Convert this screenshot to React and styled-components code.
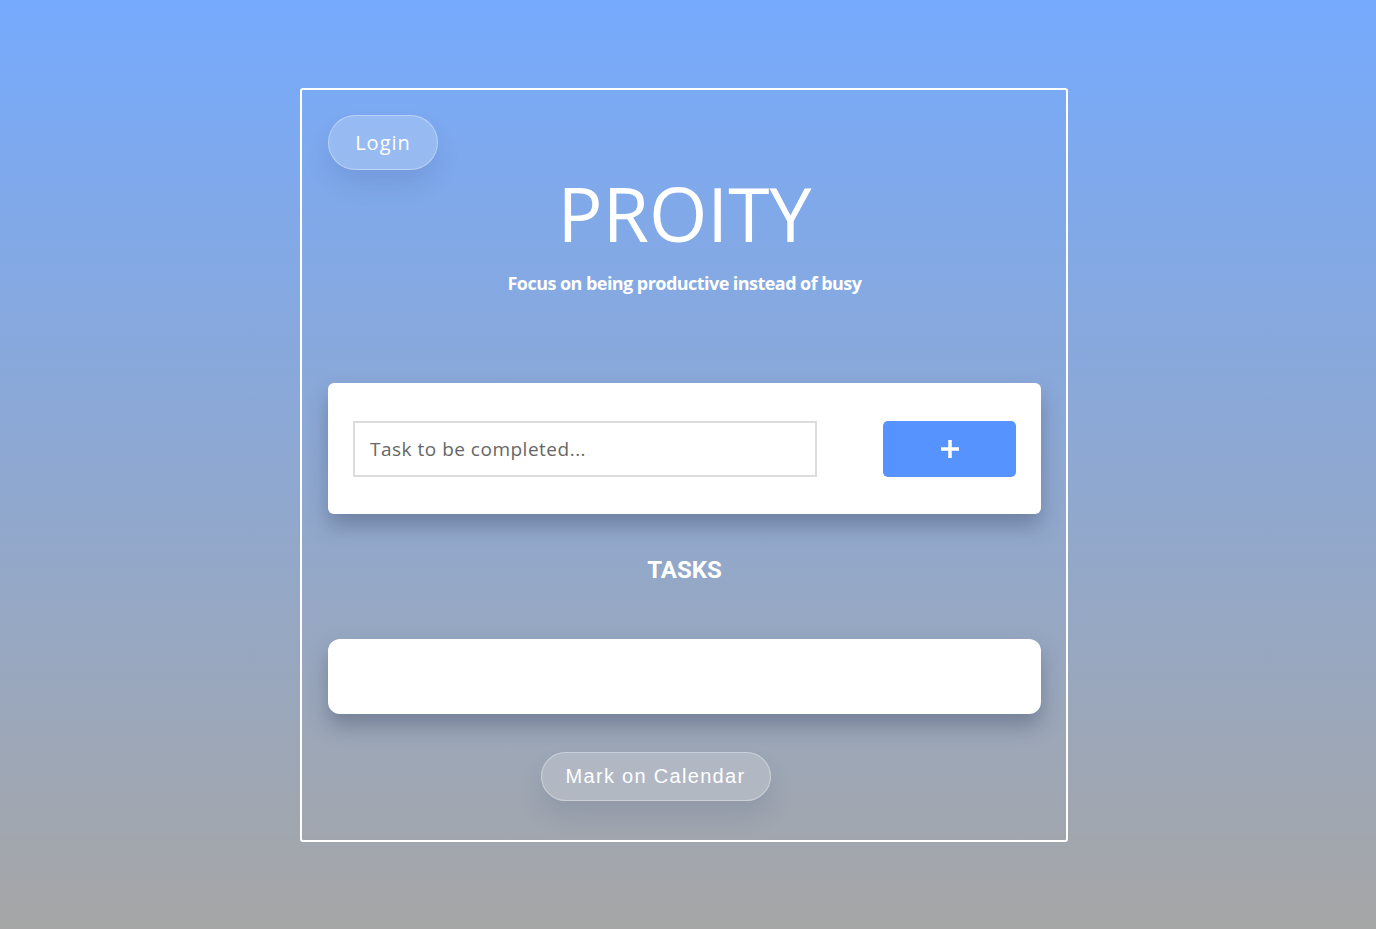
import React, { useState } from "react";
import styled, { createGlobalStyle } from "styled-components";

const GlobalStyle = createGlobalStyle`
    html, body {
        margin: 0;
        padding: 0;
    }
    body {
        font-family: "Open Sans", "Liberation Sans", sans-serif;
        background: linear-gradient(180deg, #76aafd 0%, #a6a6a6 100%);
        min-height: 929px;
    }
`;

const Page = styled.div`
    display: flex;
    justify-content: flex-start;
    padding: 88px 0 87px 300px;
`;

const Card = styled.div`
    width: 768px;
    height: 754px;
    box-sizing: border-box;
    border: 2px solid #ffffff;
    border-radius: 3px;
    padding: 25px 25px 0 26px;
    display: flex;
    flex-direction: column;
`;

const TopRow = styled.div`
    display: flex;
`;

const PillButton = styled.button`
    height: ${(p) => p.h}px;
    width: ${(p) => p.w}px;
    border-radius: 30px;
    background: rgba(255, 255, 255, 0.2);
    border: 1px solid rgba(255, 255, 255, 0.35);
    color: #ffffff;
    font-family: ${(p) => p.font};
    font-size: 20px;
    letter-spacing: ${(p) => p.spacing}px;
    box-shadow: 0 15px 25px rgba(40, 60, 110, 0.12);
    cursor: pointer;
    padding: 0;
`;

const Title = styled.h1`
    margin: 3px 0 0 0;
    text-align: center;
    color: #ffffff;
    font-family: "Open Sans", sans-serif;
    font-weight: 400;
    font-size: 75px;
    line-height: 80px;
`;

const Subtitle = styled.p`
    margin: 18px 0 0 0;
    text-align: center;
    color: #ffffff;
    font-family: "Open Sans", sans-serif;
    font-weight: 700;
    font-size: 18px;
    letter-spacing: -0.55px;
`;

const WhiteBox = styled.div`
    background: #ffffff;
    border-radius: ${(p) => p.radius}px;
    box-shadow: 0 12px 20px rgba(50, 60, 90, 0.35);
`;

const InputBox = styled(WhiteBox)`
    margin-top: 88px;
    height: 131px;
    box-sizing: border-box;
    padding: 37px 25px;
    display: flex;
    justify-content: space-between;
    align-items: center;
`;

const TaskInput = styled.input`
    width: 464px;
    height: 56px;
    box-sizing: border-box;
    border: 2px solid #dcdcdc;
    padding: 0 15px;
    font-family: "Open Sans", sans-serif;
    font-size: 19px;
    letter-spacing: 0.5px;
    color: #333;
    outline: none;
    &::placeholder {
        color: #666666;
    }
`;

const AddButton = styled.button`
    width: 133px;
    height: 56px;
    border: none;
    border-radius: 5px;
    background: #5693fe;
    display: flex;
    align-items: center;
    justify-content: center;
    cursor: pointer;
`;

const Heading = styled.h2`
    margin: 40px 0 0 0;
    text-align: center;
    color: #ffffff;
    font-family: Roboto, "Liberation Sans", sans-serif;
    font-weight: 700;
    font-size: 24px;
    line-height: 32px;
`;

const TaskList = styled(WhiteBox)`
    margin-top: 53px;
    height: 75px;
`;

const BottomRow = styled.div`
    display: flex;
    justify-content: center;
    margin-top: 38px;
    padding-right: 58px;
`;

export default function App() {
    const [task, setTask] = useState("");
    return (
        <>
            <GlobalStyle />
            <Page>
                <Card>
                    <TopRow>
                        <PillButton w={110} h={55} spacing={1} font={'"Open Sans", sans-serif'}>Login</PillButton>
                    </TopRow>
                    <Title>PROITY</Title>
                    <Subtitle>Focus on being productive instead of busy</Subtitle>
                    <InputBox radius={6}>
                        <TaskInput
                            placeholder="Task to be completed..."
                            value={task}
                            onChange={(e) => setTask(e.target.value)}
                        />
                        <AddButton>
                            <svg width="22" height="22" viewBox="0 0 22 22">
                                <path d="M11 2v18M2 11h18" stroke="#fff" strokeWidth="3.5" />
                            </svg>
                        </AddButton>
                    </InputBox>
                    <Heading>TASKS</Heading>
                    <TaskList radius={12} />
                    <BottomRow>
                        <PillButton w={230} h={49} spacing={1.3} font={'"Liberation Sans", Arial, sans-serif'}>Mark on Calendar</PillButton>
                    </BottomRow>
                </Card>
            </Page>
        </>
    );
}
